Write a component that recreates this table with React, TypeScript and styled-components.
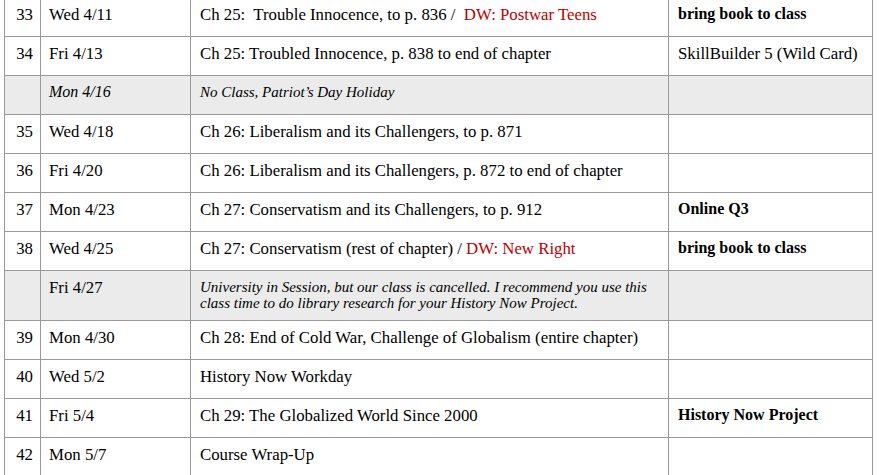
import React from 'react'
import styled, { createGlobalStyle } from 'styled-components'

const GlobalStyle = createGlobalStyle`
  html, body {
    margin: 0;
    padding: 0;
    background: #ffffff;
  }
  body {
    font-family: "Liberation Serif", "Times New Roman", serif;
    color: #000000;
    overflow: hidden;
  }
`

const Page = styled.div`
  padding-left: 4px;
  margin-top: -3px;
`

const Table = styled.table`
  border-collapse: collapse;
  table-layout: fixed;
  width: 868px;
`

const Row = styled.tr<{ $off?: boolean; $tall?: boolean }>`
  height: ${({ $tall }) => ($tall ? '50px' : '39px')};
  background: ${({ $off }) => ($off ? '#ebebeb' : '#ffffff')};
`

const Cell = styled.td<{ $italic?: boolean; $bold?: boolean }>`
  border: 1px solid #9a9a9a;
  vertical-align: top;
  padding: ${({ $italic }) => ($italic ? '8px' : '7px')} 9px 0 9px;
  white-space: pre-wrap;
  line-height: ${({ $italic }) => ($italic ? '16px' : 'normal')};
  font-size: ${({ $italic, $bold }) => ($italic ? '15px' : $bold ? '16px' : '16.8px')};
  font-style: ${({ $italic }) => ($italic ? 'italic' : 'normal')};
  font-weight: ${({ $bold }) => ($bold ? 'bold' : 'normal')};
`

const NumCell = styled(Cell)`
  text-align: right;
  padding-right: 7px;
  padding-left: 0;
`

const DateCell = styled(Cell)`
  padding-left: 8px;
  font-size: ${({ $italic }) => ($italic ? '16px' : '16.8px')};
`

const Red = styled.span`
  color: #c00000;
`

type Entry = {
  num?: string
  date: string
  topic: React.ReactNode
  note?: string
  strong?: boolean
  off?: boolean
  tall?: boolean
}

const rows: Entry[] = [
  { num: '33', date: 'Wed 4/11', topic: <>Ch 25:  Trouble Innocence, to p. 836 /  <Red>DW: Postwar Teens</Red></>, note: 'bring book to class', strong: true },
  { num: '34', date: 'Fri 4/13', topic: 'Ch 25: Troubled Innocence, p. 838 to end of chapter', note: 'SkillBuilder 5 (Wild Card)' },
  { date: 'Mon 4/16', topic: 'No Class, Patriot\u2019s Day Holiday', off: true },
  { num: '35', date: 'Wed 4/18', topic: 'Ch 26: Liberalism and its Challengers, to p. 871' },
  { num: '36', date: 'Fri 4/20', topic: 'Ch 26: Liberalism and its Challengers, p. 872 to end of chapter' },
  { num: '37', date: 'Mon 4/23', topic: 'Ch 27: Conservatism and its Challengers, to p. 912', note: 'Online Q3', strong: true },
  { num: '38', date: 'Wed 4/25', topic: <>Ch 27: Conservatism (rest of chapter) / <Red>DW: New Right</Red></>, note: 'bring book to class', strong: true },
  {
    date: 'Fri 4/27',
    topic: <>University in Session, but our class is cancelled. I recommend you use this<br />class time to do library research for your History Now Project.</>,
    off: true,
    tall: true,
  },
  { num: '39', date: 'Mon 4/30', topic: 'Ch 28: End of Cold War, Challenge of Globalism (entire chapter)' },
  { num: '40', date: 'Wed 5/2', topic: 'History Now Workday' },
  { num: '41', date: 'Fri 5/4', topic: 'Ch 29: The Globalized World Since 2000', note: 'History Now Project', strong: true },
  { num: '42', date: 'Mon 5/7', topic: 'Course Wrap-Up' },
]

const App: React.FC = () => {
  return (
    <>
      <GlobalStyle />
      <Page>
        <Table>
          <colgroup>
            <col style={{ width: 36 }} />
            <col style={{ width: 150 }} />
            <col style={{ width: 478 }} />
            <col style={{ width: 204 }} />
          </colgroup>
          <tbody>
            {rows.map((r, i) => (
              <Row key={i} $off={r.off} $tall={r.tall}>
                <NumCell>{r.num}</NumCell>
                {/* the holiday row with only one line keeps its date in italics */}
                <DateCell $italic={r.off && !r.tall}>{r.date}</DateCell>
                <Cell $italic={r.off}>{r.topic}</Cell>
                <Cell $bold={r.strong}>{r.note}</Cell>
              </Row>
            ))}
          </tbody>
        </Table>
      </Page>
    </>
  )
}

export default App
